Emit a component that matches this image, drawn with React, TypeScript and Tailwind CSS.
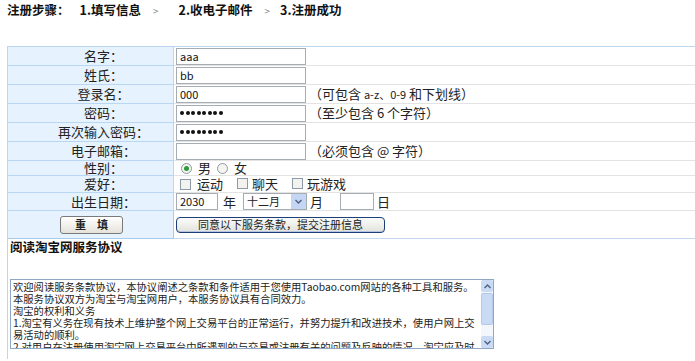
import React from 'react';

const font = { fontFamily: '"Noto Sans CJK SC", "Liberation Sans", sans-serif' };

function Radio({ checked }: { checked?: boolean }) {
  return (
    <span className="inline-flex h-[11px] w-[11px] items-center justify-center rounded-full border border-[#8d9aa8] bg-[#f4f4f0]">
      {checked && <span className="h-[5px] w-[5px] rounded-full bg-[#2e9a3a]" />}
    </span>
  );
}

function Check() {
  return <span className="inline-block h-[11px] w-[11px] border border-[#8d9aa8] bg-[#f2f2ee]" />;
}

function Dots() {
  return (
    <span className="flex items-center gap-[1.5px]">
      {[0, 1, 2, 3, 4, 5, 6, 7].map((i) => (
        <span key={i} className="h-[4px] w-[4px] rounded-full bg-[#111]" />
      ))}
    </span>
  );
}

function Field({ value, w = 'w-[130px]' }: { value?: React.ReactNode; w?: string }) {
  return (
    <div className={`${w} flex h-[17px] items-center border border-[#a5acb2] bg-white px-[3px] text-[11px] leading-none text-[#111]`}>
      {value}
    </div>
  );
}

function Row({ label, h, children, last }: { label?: React.ReactNode; h: string; children?: React.ReactNode; last?: boolean }) {
  return (
    <div className={`flex ${h}`}>
      <div
        className={`flex w-[166px] shrink-0 items-center justify-center border-r border-[#a9cbeb] bg-[#e6f2fd] pl-[26px] text-[13px] text-[#222] ${
          last ? 'border-b border-[#b6d2ee]' : 'border-b border-[#b9d6f2]'
        }`}
      >
        {label}
      </div>
      <div
        className={`flex flex-1 items-center gap-[3px] pl-[2px] text-[13px] text-[#222] ${
          last ? 'border-b border-[#c3d8ee]' : 'border-b border-[#e3e3e3]'
        }`}
      >
        {children}
      </div>
    </div>
  );
}

const agreement = [
  '欢迎阅读服务条款协议，本协议阐述之条款和条件适用于您使用Taobao.com网站的各种工具和服务。',
  '本服务协议双方为淘宝与淘宝网用户，本服务协议具有合同效力。',
  '淘宝的权利和义务',
  '1.淘宝有义务在现有技术上维护整个网上交易平台的正常运行，并努力提升和改进技术，使用户网上交',
  '易活动的顺利。',
  '2.对用户在注册使用淘宝网上交易平台中所遇到的与交易或注册有关的问题及反映的情况，淘宝应及时',
  '作出回复。',
];

export default function App() {
  return (
    <div className="relative h-[361px] w-[695px] overflow-hidden bg-white" style={font}>
      {/* steps */}
      <div className="flex h-[20px] items-center pl-[7px] text-[12.5px] font-bold text-[#111]">
        <span>注册步骤：</span>
        <span className="ml-[10px]">1.填写信息</span>
        <span className="ml-[12px] text-[10px] font-normal text-[#888]">&gt;</span>
        <span className="ml-[20px]">2.收电子邮件</span>
        <span className="ml-[12px] text-[10px] font-normal text-[#888]">&gt;</span>
        <span className="ml-[10px]">3.注册成功</span>
      </div>

      <div className="mt-[26px] ml-[7px] w-[720px] border-l border-t border-[#bcd6f0]">
        <Row label="名字：" h="h-[19px]">
          <Field value="aaa" />
        </Row>
        <Row label="姓氏：" h="h-[19px]">
          <Field value="bb" />
        </Row>
        <Row label="登录名：" h="h-[19px]">
          <Field value="000" />
          <span className="whitespace-nowrap">（可包含 <span className="text-[11px]">a-z、0-9</span> 和下划线）</span>
        </Row>
        <Row label="密码：" h="h-[19px]">
          <Field value={<Dots />} />
          <span>（至少包含 6 个字符）</span>
        </Row>
        <Row label="再次输入密码：" h="h-[19px]">
          <Field value={<Dots />} />
        </Row>
        <Row label="电子邮箱：" h="h-[19px]">
          <Field />
          <span>（必须包含 @ 字符）</span>
        </Row>
        <Row label="性别：" h="h-[15px]">
          <span className="ml-[5px] flex items-center gap-[6px]">
            <Radio checked />
            <span>男</span>
            <Radio />
            <span>女</span>
          </span>
        </Row>
        <Row label="爱好：" h="h-[17px]">
          <span className="ml-[4px] flex items-center gap-[4px]">
            <Check />
            <span className="ml-[2px]">运动</span>
            <span className="ml-[10px]"><Check /></span>
            <span>聊天</span>
            <span className="ml-[10px]"><Check /></span>
            <span>玩游戏</span>
          </span>
        </Row>
        <Row label="出生日期：" h="h-[18px]">
          <Field value="2030" w="w-[42px]" />
          <span className="ml-[2px]">年</span>
          <div className="ml-[4px] flex h-[17px] w-[64px] items-center border border-[#a5acb2] bg-white pl-[3px] text-[11px]">
            <span className="flex-1">十二月</span>
            <span className="flex h-[15px] w-[15px] items-center justify-center bg-[#c4d6f4]">
              <svg width="7" height="5" viewBox="0 0 7 5">
                <path d="M0.5 1 L3.5 4 L6.5 1" stroke="#4d6185" strokeWidth="1.4" fill="none" />
              </svg>
            </span>
          </div>
          <span>月</span>
          <span className="ml-[14px]"><Field w="w-[34px]" /></span>
          <span>日</span>
        </Row>
        <div className="flex h-[28px]">
          <div className="flex w-[166px] shrink-0 items-center border-r border-b border-[#a9cbeb] bg-[#e6f2fd] pl-[52px]">
            <button className="flex h-[18px] w-[63px] items-center justify-center rounded-[3px] border border-[#7a7a7a] bg-gradient-to-b from-[#ffffff] to-[#e4e2da] text-[11px] font-bold text-[#222]">
              重　填
            </button>
          </div>
          <div className="flex flex-1 items-center border-b border-[#c3d8ee] pl-[2px]">
            <button className="flex h-[16px] w-[209px] items-center justify-center rounded-[4px] border border-[#1c3f7a] bg-gradient-to-b from-[#fbfbfa] to-[#e3e3dc] text-[11px] text-[#222] shadow-[inset_0_-1px_0_#b6c4e0]">
              同意以下服务条款，提交注册信息
            </button>
          </div>
        </div>
        <div className="h-[120px] pl-[2px]">
          <div className="pt-[1px] text-[12.5px] font-bold leading-[14px] text-[#111]">阅读淘宝网服务协议</div>
          <div className="mt-[25px] flex h-[70px] w-[484px] border border-[#8da7c4] bg-white">
            <div className="flex-1 overflow-hidden pl-[2px] pt-[1px] text-[10.3px] leading-[12px] text-[#222]">
              {agreement.map((line) => (
                <div key={line} className="h-[12px] whitespace-nowrap">
                  {line}
                </div>
              ))}
            </div>
            <div className="flex w-[12px] flex-col bg-[#f3f6fb]">
              <div className="flex h-[12px] items-center justify-center rounded-[2px] bg-[#c9daf5]">
                <svg width="7" height="5" viewBox="0 0 7 5">
                  <path d="M0.5 4 L3.5 1 L6.5 4" stroke="#4d6185" strokeWidth="1.4" fill="none" />
                </svg>
              </div>
              <div className="mt-[1px] h-[32px] rounded-[2px] border border-[#b4c8ea] bg-[#c9daf5]" />
              <div className="flex-1" />
              <div className="flex h-[12px] items-center justify-center rounded-[2px] bg-[#c9daf5]">
                <svg width="7" height="5" viewBox="0 0 7 5">
                  <path d="M0.5 1 L3.5 4 L6.5 1" stroke="#4d6185" strokeWidth="1.4" fill="none" />
                </svg>
              </div>
            </div>
          </div>
        </div>
      </div>
    </div>
  );
}
